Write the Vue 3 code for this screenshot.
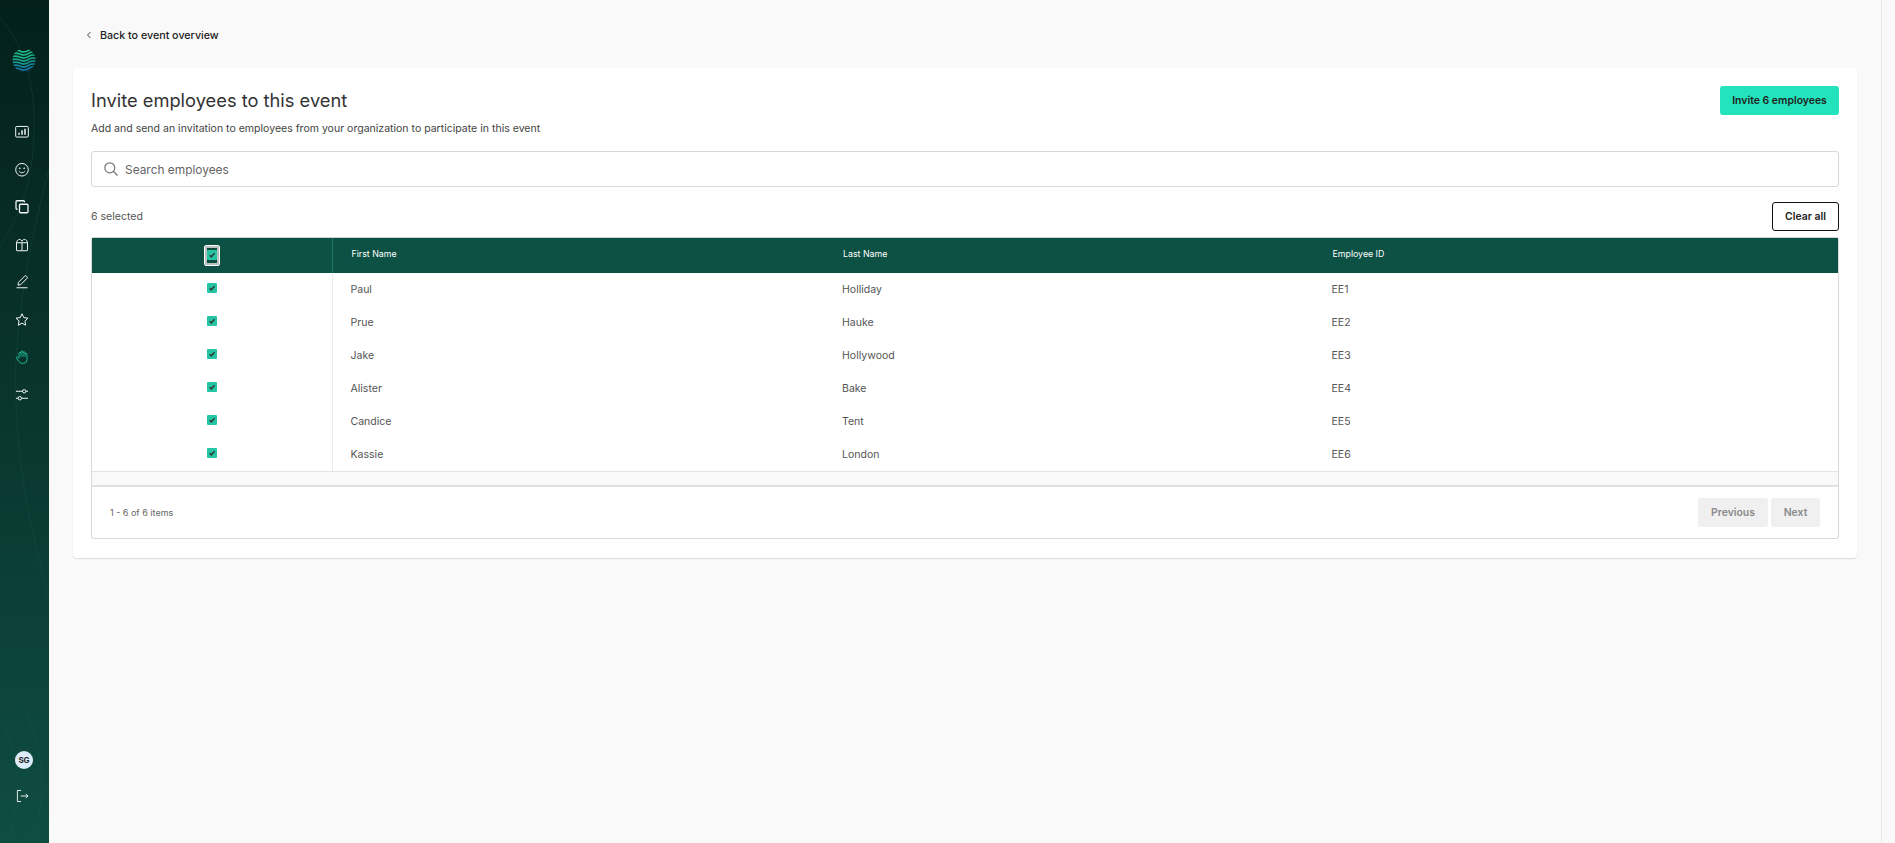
<script setup>
const rows = [
  ['Paul', 'Holliday', 'EE1'],
  ['Prue', 'Hauke', 'EE2'],
  ['Jake', 'Hollywood', 'EE3'],
  ['Alister', 'Bake', 'EE4'],
  ['Candice', 'Tent', 'EE5'],
  ['Kassie', 'London', 'EE6'],
]
const waves = [
  ['#20bb84', 2.2], ['#20b884', 5.2], ['#1eb086', 8.2], ['#1ca68c', 11.2],
  ['#1a9896', 14.2], ['#1a88a0', 17.2], ['#1a78a8', 20.2], ['#1a6cb0', 23],
]
</script>

<template>
  <div class="page">
    <aside class="side">
      <svg class="curves" viewBox="0 0 49 843" preserveAspectRatio="none" fill="none" stroke="#1d5a4c" stroke-opacity=".3" stroke-width="1">
        <path d="M0 18C20 40 36 80 34 130C32 210 6 230 0 250" />
        <path d="M49 170C30 240 20 300 16 360C12 470 40 560 49 600" />
        <path d="M0 720C22 760 24 800 6 843" />
        <path d="M20 700C46 750 48 800 30 843" />
      </svg>
      <svg class="logo" width="24" height="24" viewBox="0 0 24 24" fill="none" stroke-width="1.6">
        <defs><clipPath id="globe"><circle cx="12" cy="12" r="11.500" /></clipPath></defs>
        <g clip-path="url(#globe)">
          <path v-for="w in waves" :key="w[1]" :stroke="w[0]" :d="`M-1 ${w[1] + 1.2}c4-2.600 7-1 10 0s6 .2 8-1.300 4-1.500 8-.6`" />
        </g>
      </svg>
      <nav class="nav">
        <svg class="ic" viewBox="0 0 14 12"><rect x=".7" y=".7" width="12.600" height="10.600" rx="1" /><path d="M4 9V7M7 9V4.500M10 9V3" stroke-width="1.500" /></svg>
        <svg class="ic" viewBox="0 0 14 14"><circle cx="7" cy="7" r="6.300" /><circle cx="4.800" cy="5.500" r=".5" /><circle cx="9.200" cy="5.500" r=".5" /><path d="M4 8.500c1.500 2 4.500 2 6 0" /></svg>
        <svg class="ic" viewBox="0 0 14 14"><rect x="4.500" y="4.500" width="8.500" height="8.500" rx="1" stroke-width="1.300" /><path d="M2.500 9.500H2A1 1 0 0 1 1 8.500V2A1 1 0 0 1 2 1h6.500a1 1 0 0 1 1 1v.5" stroke-width="1.300" /></svg>
        <svg class="ic" viewBox="0 0 14 14"><path d="M1.500 5h11v7.500a.5.500 0 0 1-.5.500H2a.5.500 0 0 1-.5-.5zM7 5v8M1.500 5C1.500 2 5.500 0 7 3.500 8.500 0 12.500 2 12.500 5" /></svg>
        <svg class="ic" viewBox="0 0 14 14"><path d="M3 10.500 3.500 7.500 9.800 1.200a1 1 0 0 1 1.400 0l.9.900a1 1 0 0 1 0 1.400L5.800 9.800zM1.500 13h11" /></svg>
        <svg class="ic" viewBox="0 0 14 14"><path d="M7 1l1.800 3.900 4.200.5-3.100 2.900.8 4.200L7 10.400 3.300 12.500l.8-4.200L1 5.400l4.200-.5z" /></svg>
        <svg class="ic hand" viewBox="0 0 14 14"><path d="M4 8.500V3.500a1 1 0 0 1 2 0V2.200a1 1 0 0 1 2 0V3a1 1 0 0 1 2 0v1.500a1 1 0 0 1 2 0V10a3.500 3.500 0 0 1-3.500 3.500H7c-1.500 0-2.500-.8-3.200-2L1.500 8.500c-.5-.9.700-1.700 1.400-1zM6 3.500V7M8 3V7M10 4.500V7" /></svg>
        <svg class="ic" viewBox="0 0 14 14"><path d="M1 3.500h6.500M11 3.500h2M1 10.500h2M6.500 10.500H13" /><circle cx="9.200" cy="3.500" r="1.700" /><circle cx="4.800" cy="10.500" r="1.700" /></svg>
      </nav>
      <div class="avatar">SG</div>
      <svg class="ic logout" viewBox="0 0 14 14"><path d="M5.500 1H1.500v12h4M5 7h8M10.500 4.800 13 7l-2.500 2.200" /></svg>
    </aside>

    <main class="main">
      <a class="back"><svg width="6" height="8" viewBox="0 0 6 8" fill="none" stroke="#444" stroke-width="1"><path d="M4.500 1 1.500 4l3 3" /></svg>Back to event overview</a>
      <section class="card">
        <div class="head">
          <div>
            <h1>Invite employees to this event</h1>
            <p>Add and send an invitation to employees from your organization to participate in this event</p>
          </div>
          <button class="primary">Invite 6 employees</button>
        </div>
        <div class="search">
          <svg width="14" height="14" viewBox="0 0 14 14" fill="none" stroke="#777" stroke-width="1.200"><circle cx="5.800" cy="5.800" r="5" /><path d="M9.500 9.500 13.500 13.500" /></svg>
          <span>Search employees</span>
        </div>
        <div class="selbar">
          <span>6 selected</span>
          <button class="outline">Clear all</button>
        </div>
        <div class="table">
          <div class="row thead">
            <div class="c0">
              <span class="hbox"><span class="cb"><svg viewBox="0 0 10 10"><path d="M2.700 5.200 4.300 6.800 7.500 3.200" /></svg></span></span>
            </div>
            <div class="c1">First Name</div>
            <div class="c2">Last Name</div>
            <div class="c3">Employee ID</div>
          </div>
          <div class="row tr" v-for="r in rows" :key="r[2]">
            <div class="c0"><span class="cb"><svg viewBox="0 0 10 10"><path d="M2.700 5.200 4.300 6.800 7.500 3.200" /></svg></span></div>
            <div class="c1">{{ r[0] }}</div>
            <div class="c2">{{ r[1] }}</div>
            <div class="c3">{{ r[2] }}</div>
          </div>
          <div class="strip"></div>
          <div class="pager">
            <span>1 - 6 of 6 items</span>
            <div class="pbtns">
              <button class="off">Previous</button>
              <button class="off">Next</button>
            </div>
          </div>
        </div>
      </section>
    </main>
    <div class="rail"></div>
  </div>
</template>

<style>
html, body { margin: 0; background: #f9f9f9; }
</style>

<style scoped>
* { box-sizing: border-box; }
.page {
  display: flex;
  width: 1895px;
  height: 843px;
  overflow: hidden;
  background: #f9f9f9;
  font-family: Inter, "Noto Sans", sans-serif;
  color: #333;
}
.side {
  position: relative;
  flex: 0 0 49px;
  display: flex;
  flex-direction: column;
  align-items: center;
  background: linear-gradient(180deg, #03201b 0%, #0f4d41 100%);
}
.curves { position: absolute; inset: 0; width: 100%; height: 100%; }
.logo { position: relative; margin: 48px 0 0 -2px; }
.nav {
  position: relative;
  margin-top: 52px;
  margin-left: -5px;
  display: flex;
  flex-direction: column;
  gap: 22px;
  align-items: center;
}
.ic {
  width: 14px;
  height: 15.500px;
  fill: none;
  stroke: #f2f6f5;
  stroke-width: 1;
}
.hand { stroke: #21c49c; stroke-width: .9; }
.avatar {
  position: relative;
  margin-top: auto;
  margin-left: -1px;
  width: 18px;
  height: 18px;
  border-radius: 50%;
  background: #dcebfb;
  color: #222;
  font-size: 8px;
  font-weight: 700;
  display: flex;
  align-items: center;
  justify-content: center;
}
.logout { position: relative; margin: 20px 5px 40px 0; height: 14px; width: 13px; }
.main {
  flex: 0 0 1808px;
  padding: 0 0 0 24px;
}
.back {
  height: 68px;
  padding: 2px 0 0 13px;
  display: flex;
  align-items: center;
  gap: 8px;
  font-size: 10.700px;
  font-weight: 500;
  color: #222;
}
.card {
  width: 1784px;
  height: 490px;
  background: #fff;
  border-radius: 4px;
  box-shadow: 0 1px 1px rgba(0, 0, 0, .12);
  padding: 18px 18px 0;
}
.head { display: flex; justify-content: space-between; align-items: flex-start; height: 65px; }
h1 {
  margin: -1px 0 0;
  font-size: 18.300px;
  line-height: 30px;
  font-weight: 400;
  color: #333;
}
p { margin: 7px 0 0; font-size: 10.540px; line-height: 14px; color: #444; }
button {
  font-family: inherit;
  font-size: 10.450px;
  font-weight: 600;
  border-radius: 3px;
  height: 29px;
  color: #222;
  padding: 0;
}
.primary { width: 119px; background: #22e3bb; border: 0; }
.search {
  height: 36px;
  border: 1px solid #d8d8d8;
  border-radius: 3px;
  display: flex;
  align-items: center;
  gap: 7px;
  padding-left: 12px;
  font-size: 11.900px;
  color: #666;
}
.selbar {
  height: 44px;
  display: flex;
  justify-content: space-between;
  align-items: flex-end;
  font-size: 10.540px;
  color: #555;
}
.selbar span { padding-bottom: 8px; }
.outline { width: 67px; background: #fff; border: 1.500px solid #111; }
.table {
  margin-top: 6px;
  height: 302px;
  border: 1px solid #d8d8d8;
  border-radius: 3px;
  border-top-color: #d0d0d0;
}
.row { display: grid; grid-template-columns: 241px 491.500px 489.500px 1fr; align-items: stretch; }
.row > div { display: flex; align-items: center; padding-left: 18px; }
.thead { height: 34.500px; background: #0c5144; color: #fff; font-size: 8.800px; }
.thead .c0 { border-right: 1px solid #137d66; justify-content: center; padding: 0; }
.thead .c1, .thead .c2, .thead .c3 { padding-left: 18.500px; padding-bottom: 3px; }
.tr { height: 33px; font-size: 10.540px; color: #555; }
.tr .c0 {
  border-right: 1px solid #ececec;
  justify-content: center;
  align-items: flex-start;
  padding: 10px 0 0;
}
.tr .c1, .tr .c2, .tr .c3 { padding-top: 1px; padding-left: 17.500px; }
.cb {
  width: 10px;
  height: 10px;
  border-radius: 1px;
  background: #26c4a4;
  display: block;
}
.cb svg { display: block; width: 10px; height: 10px; fill: none; stroke: #2c3a36; stroke-width: 1.500; }
.hbox {
  width: 16px;
  height: 21px;
  border: 1px solid #fff;
  border-radius: 2px;
  background: #0c4a3e;
  box-shadow: inset 0 0 0 2px #b9c2bf;
  display: flex;
  align-items: center;
  justify-content: center;
}
.strip {
  height: 16px;
  background: #f9f9f9;
  border-top: 1px solid #e4e4e4;
  border-bottom: 2px solid #e0e0e0;
}
.pager {
  height: 51px;
  display: flex;
  justify-content: space-between;
  align-items: center;
  padding: 0 18px;
  font-size: 9px;
  color: #666;
}
.pbtns { display: flex; gap: 3px; }
.off { background: #f0f0f0; border: 0; color: #8a8a8a; width: 70px; }
.off:last-child { width: 49px; }
.rail { flex: 0 0 38px; position: relative; }
.rail::before { content: ""; position: absolute; left: 24px; top: 0; bottom: 0; width: 1px; background: #e9e9e9; }
</style>
